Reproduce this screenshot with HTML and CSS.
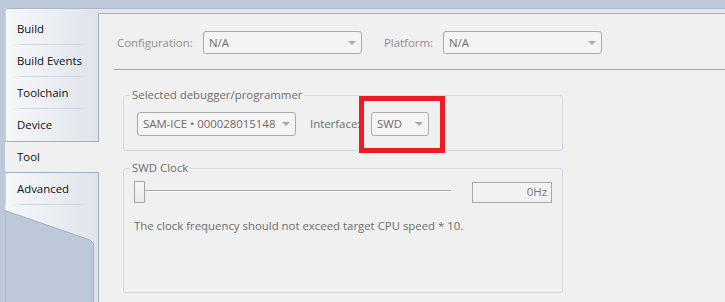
FILE: index.html
```html
<!DOCTYPE html>
<html>
<head>
<meta charset="utf-8">
<link rel="stylesheet" href="styles.css">
</head>
<body>
<div class="frame">
  <nav class="tabs">
    <ul class="tab-list">
      <li class="tab">Build</li>
      <li class="tab">Build Events</li>
      <li class="tab">Toolchain</li>
      <li class="tab">Device</li>
      <li class="tab active">Tool</li>
      <li class="tab">Advanced</li>
    </ul>
    <div class="tail">
      <svg width="93" height="97" viewBox="0 0 93 97">
        <polygon points="0,5.5 85,35 88.5,38.5 88.5,98 0,98" fill="#bdc8d8" stroke="#a2b0c2" stroke-width="1"/>
      </svg>
    </div>
  </nav>
  <main class="panel">
    <div class="config-row">
      <span class="cfg-label">Configuration:</span>
      <div class="combo"><span>N/A</span></div>
      <span class="plat-label">Platform:</span>
      <div class="combo"><span>N/A</span></div>
    </div>
    <hr class="sep">
    <fieldset class="group">
      <legend>Selected debugger/programmer</legend>
      <div class="group-row">
        <div class="combo tall"><span>SAM-ICE • 000028015148</span></div>
        <span class="if-label">Interface:</span>
        <div class="combo tall swd"><span>SWD</span></div>
      </div>
    </fieldset>
    <fieldset class="group clock">
      <legend>SWD Clock</legend>
      <div class="clock-body">
        <div class="slider-row">
          <div class="slider"><div class="thumb"></div></div>
          <div class="value">0Hz</div>
        </div>
        <p class="note">The clock frequency should not exceed target CPU speed * 10.</p>
      </div>
    </fieldset>
  </main>
</div>
<div class="highlight"></div>
</body>
</html>
```
FILE: styles.css
```css
html, body {
  margin: 0;
}
body {
  width: 725px;
  height: 302px;
  overflow: hidden;
  position: relative;
  background: #bdc8d8;
  font-family: "Open Sans", "Noto Sans", sans-serif;
  font-size: 11.4px;
  line-height: 16px;
}
.frame {
  display: flex;
  margin: 8px 0 0 5px;
  height: 294px;
  box-sizing: border-box;
  border-top: 1px solid #aab7c9;
  border-top-left-radius: 4px;
  background: #e1e7ee;
  overflow: hidden;
}
.tabs {
  width: 93px;
  flex: none;
  display: flex;
  flex-direction: column;
}
.tab-list {
  list-style: none;
  margin: 0;
  padding: 4px 0 0;
  background: linear-gradient(to right, #f6f7f9, #dfe4eb);
  border-left: 1px solid #cdd4dd;
}
.tab {
  position: relative;
  height: 32px;
  box-sizing: border-box;
  display: flex;
  align-items: center;
  padding-left: 11px;
  color: #0f0f0f;
}
.tab::after {
  content: "";
  position: absolute;
  left: 5px;
  right: 8px;
  bottom: 0;
  height: 1px;
  background: linear-gradient(to right, rgba(205,211,219,0), #d2d8e0 15%, #d2d8e0 85%, rgba(205,211,219,0));
}
.tab.active {
  margin: 0 -1px 0 -3px;
  padding-left: 12px;
  background: #f0f0f0;
  border-top: 1px solid #9fb0c6;
  border-bottom: 1px solid #9fb0c6;
  border-left: 2px solid #f1cf7e;
  z-index: 1;
}
.tab.active::after,
.tab:has(+ .active)::after {
  display: none;
}
.tail {
  flex: 1;
  background: linear-gradient(to right, #f6f7f9, #dfe4eb);
}
.tail svg {
  display: block;
}
.panel {
  flex: 1;
  margin-top: 4px;
  border-top: 1px solid #9fb0c6;
  border-left: 1px solid #9fb0c6;
  background: #f0f0f0;
  padding: 17px 0 0 15px;
}
.config-row {
  display: flex;
  align-items: center;
  padding-left: 3px;
  height: 23px;
}
.cfg-label {
  width: 86px;
  color: #8f8f8f;
}
.plat-label {
  margin-left: 22px;
  width: 59px;
  color: #8f8f8f;
}
.combo {
  box-sizing: border-box;
  width: 159px;
  height: 23px;
  border: 1px solid #ababab;
  border-radius: 3px;
  background: #f4f4f4;
  display: flex;
  align-items: center;
  justify-content: space-between;
  padding: 0 5px 0 5px;
  color: #6b6b6b;
  flex: none;
}
.combo::after {
  content: "";
  border-left: 4px solid transparent;
  border-right: 4px solid transparent;
  border-top: 4px solid #a9a9a9;
}
.combo.tall {
  height: 24px;
}
.combo.swd {
  width: 58px;
}
.sep {
  border: none;
  height: 1px;
  background: #a6a6a6;
  margin: 15px 0 0 0;
}
.group {
  margin: 17px 0 0 9px;
  width: 440px;
  box-sizing: border-box;
  border: 1px solid #d3dbe2;
  border-radius: 3px;
  padding: 0;
  min-width: 0;
}
.group legend {
  margin-left: 6px;
  padding: 0 2px;
  line-height: 16px;
  color: #6d6d6d;
}
.group-row {
  display: flex;
  align-items: center;
  padding: 9px 0 14px 13px;
}
.if-label {
  margin-left: 14px;
  width: 61px;
  color: #6d6d6d;
}
.clock {
  margin-top: 9px;
}
.clock-body {
  padding: 5px 0 58px 10px;
}
.slider-row {
  display: flex;
  align-items: center;
}
.slider {
  width: 317px;
  height: 22px;
  background:
    linear-gradient(#a9a9a9, #a9a9a9) 0 9px / 100% 1px no-repeat,
    linear-gradient(#ffffff, #ffffff) 0 10px / 100% 1px no-repeat;
}
.thumb {
  width: 11px;
  height: 22px;
  box-sizing: border-box;
  border: 1px solid #a3a3a3;
  border-radius: 1px;
  background: linear-gradient(#f7f7f7, #e9e9e9);
}
.value {
  margin-left: 21px;
  width: 80px;
  height: 21px;
  box-sizing: border-box;
  border: 1px solid #a9a9a9;
  background: #f2f2f2;
  display: flex;
  align-items: center;
  justify-content: flex-end;
  padding-right: 4px;
  color: #767676;
}
.note {
  margin: 15px 0 0;
  line-height: 16px;
  color: #6d6d6d;
}
.highlight {
  position: absolute;
  left: 359px;
  top: 96px;
  width: 86px;
  height: 57px;
  box-sizing: border-box;
  border: 5px solid #ec1c24;
}
```
